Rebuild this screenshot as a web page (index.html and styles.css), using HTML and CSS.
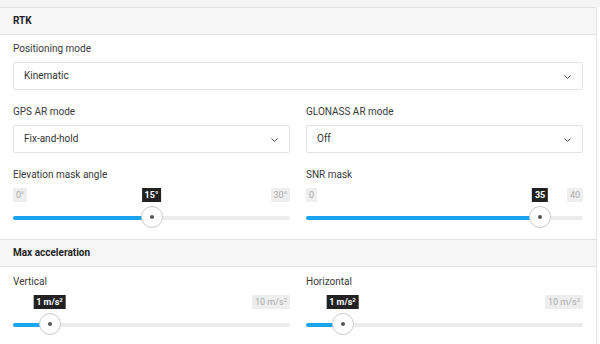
FILE: index.html
```html
<!DOCTYPE html>
<html lang="en">
<head>
    <meta charset="UTF-8">
    <title>RTK settings</title>
    <link rel="stylesheet" href="styles.css">
</head>
<body>

<div class="top-strip"></div>

<div class="panel">
    <div class="section-title">RTK</div>
    <div class="section-body">
        <div class="field">
            <label>Positioning mode</label>
            <div class="select">Kinematic
                <svg class="chevron" width="7" height="4" viewBox="0 0 7 4"><polyline points="0.5,0.5 3.5,3.3 6.5,0.5" fill="none" stroke="#444" stroke-width="1"/></svg>
            </div>
        </div>

        <div class="row">
            <div class="field">
                <label>GPS AR mode</label>
                <div class="select">Fix-and-hold
                    <svg class="chevron" width="7" height="4" viewBox="0 0 7 4"><polyline points="0.5,0.5 3.5,3.3 6.5,0.5" fill="none" stroke="#444" stroke-width="1"/></svg>
                </div>
            </div>
            <div class="field">
                <label>GLONASS AR mode</label>
                <div class="select">Off
                    <svg class="chevron" width="7" height="4" viewBox="0 0 7 4"><polyline points="0.5,0.5 3.5,3.3 6.5,0.5" fill="none" stroke="#444" stroke-width="1"/></svg>
                </div>
            </div>
        </div>

        <div class="row">
            <div class="field">
                <label>Elevation mask angle</label>
                <div class="slider" style="--p: 0.5">
                    <div class="slider-labels">
                        <span class="limit">0°</span>
                        <span class="value">15°</span>
                        <span class="limit">30°</span>
                    </div>
                    <div class="track-wrap">
                        <div class="track"><div class="fill"></div></div>
                        <div class="thumb"></div>
                    </div>
                </div>
            </div>
            <div class="field">
                <label>SNR mask</label>
                <div class="slider" style="--p: 0.875">
                    <div class="slider-labels">
                        <span class="limit">0</span>
                        <span class="value">35</span>
                        <span class="limit">40</span>
                    </div>
                    <div class="track-wrap">
                        <div class="track"><div class="fill"></div></div>
                        <div class="thumb"></div>
                    </div>
                </div>
            </div>
        </div>
    </div>

    <div class="section-title">Max acceleration</div>
    <div class="section-body accel">
        <div class="row">
            <div class="field">
                <label>Vertical</label>
                <div class="slider" style="--p: 0.1">
                    <div class="slider-labels">
                        <span></span>
                        <span class="value">1 m/s<sup>2</sup></span>
                        <span class="limit">10 m/s<sup>2</sup></span>
                    </div>
                    <div class="track-wrap">
                        <div class="track"><div class="fill"></div></div>
                        <div class="thumb"></div>
                    </div>
                </div>
            </div>
            <div class="field">
                <label>Horizontal</label>
                <div class="slider" style="--p: 0.1">
                    <div class="slider-labels">
                        <span></span>
                        <span class="value">1 m/s<sup>2</sup></span>
                        <span class="limit">10 m/s<sup>2</sup></span>
                    </div>
                    <div class="track-wrap">
                        <div class="track"><div class="fill"></div></div>
                        <div class="thumb"></div>
                    </div>
                </div>
            </div>
        </div>
    </div>
</div>

</body>
</html>
```

FILE: styles.css
```css
body {
    margin: 0;
    font-family: Roboto, "Liberation Sans", sans-serif;
    font-size: 10px;
    color: #333;
    background: #fff;
}
.top-strip {
    height: 7px;
    background: #f4f4f4;
}
.panel {
    width: 596px;
    border-right: 1px solid #e4e4e4;
}
.section-title {
    height: 26px;
    line-height: 26px;
    padding: 0 13px;
    background: #f6f6f6;
    border-top: 1px solid #e3e3e3;
    border-bottom: 1px solid #e3e3e3;
    font-weight: bold;
    color: #222;
}
.section-body {
    padding: 7px 13px 10px;
}
.section-body.accel {
    padding-top: 8px;
}
.field label {
    display: block;
    line-height: 14px;
    color: #3a3a3a;
}
.row {
    display: grid;
    grid-template-columns: 1fr 1fr;
    gap: 16px;
    margin-top: 15px;
}
.accel .row {
    margin-top: 0;
}
.select {
    position: relative;
    margin-top: 6px;
    height: 28px;
    box-sizing: border-box;
    border: 1px solid #e2e2e2;
    border-radius: 2px;
    padding-left: 10px;
    line-height: 26px;
    color: #333;
}
.chevron {
    position: absolute;
    right: 11px;
    top: 12px;
}
.slider {
    --left: calc(11px + var(--p) * (100% - 22px));
}
.slider-labels {
    position: relative;
    display: flex;
    justify-content: space-between;
    height: 14px;
    margin-top: 6px;
    font-size: 9px;
    line-height: 14px;
}
.limit {
    background: #eee;
    color: #aaa;
    padding: 0 3px;
}
.value {
    position: absolute;
    left: var(--left);
    transform: translateX(-50%);
    background: #222;
    color: #fff;
    font-weight: bold;
    padding: 0 3px;
    white-space: nowrap;
}
sup {
    font-size: 6px;
    line-height: 0;
    vertical-align: 3px;
}
.track-wrap {
    position: relative;
    height: 23px;
    margin-top: 4px;
}
.track {
    position: absolute;
    left: 0;
    right: 0;
    top: 10px;
    height: 4px;
    border-radius: 2px;
    background: #ececec;
}
.fill {
    width: var(--left);
    height: 100%;
    border-radius: 2px;
    background: #1aa3ee;
}
.thumb {
    position: absolute;
    top: 0;
    left: var(--left);
    width: 22px;
    height: 22px;
    margin-left: -11px;
    border: 1px solid #c9c9c9;
    border-radius: 50%;
    background: #fff;
    box-sizing: border-box;
}
.thumb::after {
    content: "";
    position: absolute;
    left: 8px;
    top: 8px;
    width: 4px;
    height: 4px;
    border-radius: 50%;
    background: #555;
}
```
